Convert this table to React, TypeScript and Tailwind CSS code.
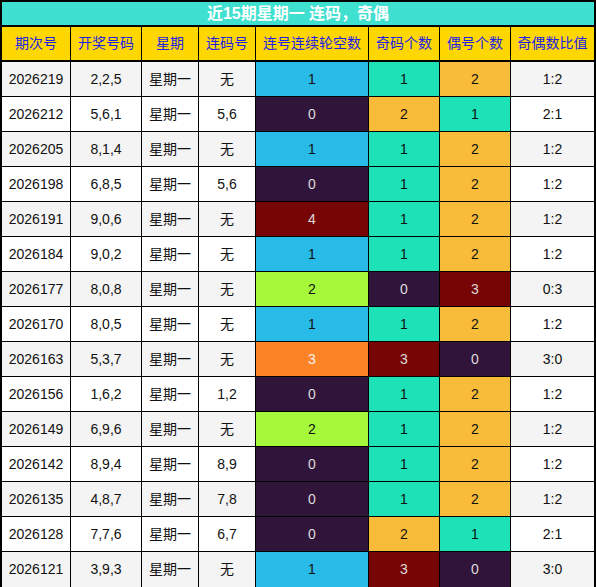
import React from 'react';

type Row = {
    issue: string;
    nums: string;
    week: string;
    link: string;
    gap: number;
    odd: number;
    even: number;
    ratio: string;
};

const rows: Row[] = [
    { issue: '2026219', nums: '2,2,5', week: '星期一', link: '无', gap: 1, odd: 1, even: 2, ratio: '1:2' },
    { issue: '2026212', nums: '5,6,1', week: '星期一', link: '5,6', gap: 0, odd: 2, even: 1, ratio: '2:1' },
    { issue: '2026205', nums: '8,1,4', week: '星期一', link: '无', gap: 1, odd: 1, even: 2, ratio: '1:2' },
    { issue: '2026198', nums: '6,8,5', week: '星期一', link: '5,6', gap: 0, odd: 1, even: 2, ratio: '1:2' },
    { issue: '2026191', nums: '9,0,6', week: '星期一', link: '无', gap: 4, odd: 1, even: 2, ratio: '1:2' },
    { issue: '2026184', nums: '9,0,2', week: '星期一', link: '无', gap: 1, odd: 1, even: 2, ratio: '1:2' },
    { issue: '2026177', nums: '8,0,8', week: '星期一', link: '无', gap: 2, odd: 0, even: 3, ratio: '0:3' },
    { issue: '2026170', nums: '8,0,5', week: '星期一', link: '无', gap: 1, odd: 1, even: 2, ratio: '1:2' },
    { issue: '2026163', nums: '5,3,7', week: '星期一', link: '无', gap: 3, odd: 3, even: 0, ratio: '3:0' },
    { issue: '2026156', nums: '1,6,2', week: '星期一', link: '1,2', gap: 0, odd: 1, even: 2, ratio: '1:2' },
    { issue: '2026149', nums: '6,9,6', week: '星期一', link: '无', gap: 2, odd: 1, even: 2, ratio: '1:2' },
    { issue: '2026142', nums: '8,9,4', week: '星期一', link: '8,9', gap: 0, odd: 1, even: 2, ratio: '1:2' },
    { issue: '2026135', nums: '4,8,7', week: '星期一', link: '7,8', gap: 0, odd: 1, even: 2, ratio: '1:2' },
    { issue: '2026128', nums: '7,7,6', week: '星期一', link: '6,7', gap: 0, odd: 2, even: 1, ratio: '2:1' },
    { issue: '2026121', nums: '3,9,3', week: '星期一', link: '无', gap: 1, odd: 3, even: 0, ratio: '3:0' },
];

// gap column colours (0..4)
const gapColor: Record<number, string> = {
    0: 'bg-[#31143a] text-[#dcdcdc]',
    1: 'bg-[#29bbe8] text-[#111]',
    2: 'bg-[#a6f83a] text-[#111]',
    3: 'bg-[#fc8426] text-[#f2f2f2]',
    4: 'bg-[#780505] text-[#dcdcdc]',
};

// odd / even count colours (0..3)
const countColor: Record<number, string> = {
    0: 'bg-[#31143a] text-[#dcdcdc]',
    1: 'bg-[#1de2b8] text-[#111]',
    2: 'bg-[#f9bb3a] text-[#111]',
    3: 'bg-[#780505] text-[#dcdcdc]',
};

const cols = 'grid grid-cols-[69px_71px_57px_57px_113px_71px_71px_83px]';
const cell = 'flex items-center justify-center border-r border-black';

const headers = ['期次号', '开奖号码', '星期', '连码号', '连号连续轮空数', '奇码个数', '偶号个数', '奇偶数比值'];

export default function App() {
    return (
        <div className="w-[596px] border-2 border-black bg-white font-['Liberation_Sans','Noto_Sans_CJK_SC',sans-serif] text-[14px] text-[#111]">
            <div className="h-[25px] border-b-2 border-black bg-[#40e0d0] flex items-center justify-center text-white font-bold text-[16px]">
                近15期星期一 连码，奇偶
            </div>

            <div className={cn(cols, 'h-[35px] border-b-2 border-black bg-[#fed700] text-[#2121e6]')}>
                {headers.map((h, i) => (
                    <div key={h} className={i === 7 ? 'flex items-center justify-center' : cell}>
                        {h}
                    </div>
                ))}
            </div>

            {rows.map((r, i) => {
                const plain = i % 2 === 0 ? 'bg-[#f4f4f4]' : 'bg-white';
                return (
                    <div key={r.issue} className={cn(cols, 'h-[35px]', i < rows.length - 1 && 'border-b border-black')}>
                        <div className={cn(cell, plain)}>{r.issue}</div>
                        <div className={cn(cell, plain)}>{r.nums}</div>
                        <div className={cn(cell, plain)}>{r.week}</div>
                        <div className={cn(cell, plain)}>{r.link}</div>
                        <div className={cn(cell, gapColor[r.gap])}>{r.gap}</div>
                        <div className={cn(cell, countColor[r.odd])}>{r.odd}</div>
                        <div className={cn(cell, countColor[r.even])}>{r.even}</div>
                        <div className={cn('flex items-center justify-center', plain)}>{r.ratio}</div>
                    </div>
                );
            })}
        </div>
    );
}

function cn(...parts: (string | false | undefined)[]) {
    return parts.filter(Boolean).join(' ');
}
